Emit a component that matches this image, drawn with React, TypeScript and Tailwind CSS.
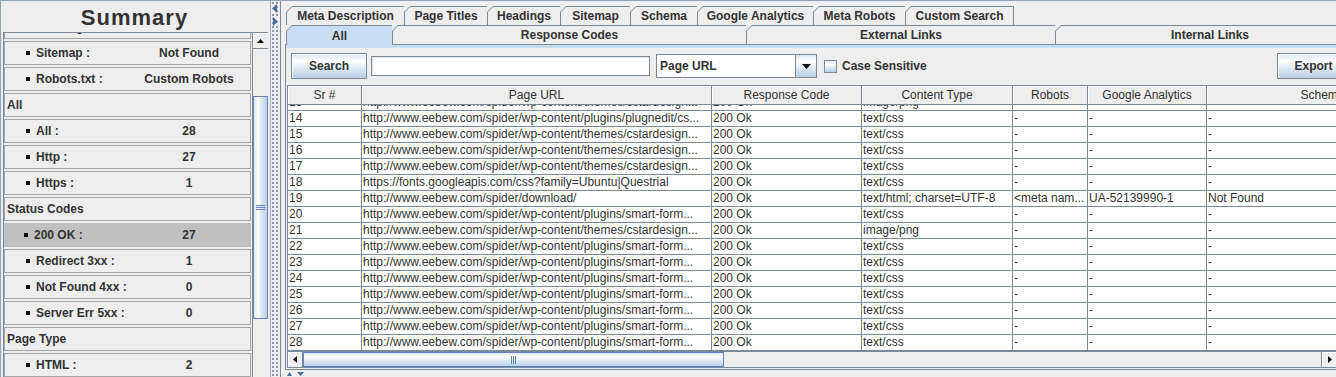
import React from 'react';

// Swing "Metal / Ocean" look: SEO spider results window.
const FONT = "font-['Liberation_Sans',Arial,sans-serif]";
const GRAD_V = 'bg-[linear-gradient(to_bottom,#dde8f3_0%,#ffffff_30%,#dde8f3_60%,#b8cfe5_100%)]';
const GRAD_H = 'bg-[linear-gradient(to_right,#dde8f3_0%,#ffffff_30%,#dde8f3_60%,#b8cfe5_100%)]';

type Item =
    | { kind: 'head'; label: string }
    | { kind: 'row'; label: string; value: string; selected?: boolean; partial?: boolean };

const summary: Item[] = [
    { kind: 'row', label: 'Headings :', value: '', partial: true },
    { kind: 'row', label: 'Sitemap :', value: 'Not Found' },
    { kind: 'row', label: 'Robots.txt :', value: 'Custom Robots' },
    { kind: 'head', label: 'All' },
    { kind: 'row', label: 'All :', value: '28' },
    { kind: 'row', label: 'Http :', value: '27' },
    { kind: 'row', label: 'Https :', value: '1' },
    { kind: 'head', label: 'Status Codes' },
    { kind: 'row', label: '200 OK :', value: '27', selected: true },
    { kind: 'row', label: 'Redirect 3xx :', value: '1' },
    { kind: 'row', label: 'Not Found 4xx :', value: '0' },
    { kind: 'row', label: 'Server Err 5xx :', value: '0' },
    { kind: 'head', label: 'Page Type' },
    { kind: 'row', label: 'HTML :', value: '2' },
];

const tabsTop = [
    { label: 'Meta Description', w: 'w-[118px]' },
    { label: 'Page Titles', w: 'w-[83px]' },
    { label: 'Headings', w: 'w-[73px]' },
    { label: 'Sitemap', w: 'w-[70px]' },
    { label: 'Schema', w: 'w-[67px]' },
    { label: 'Google Analytics', w: 'w-[116px]' },
    { label: 'Meta Robots', w: 'w-[92px]' },
    { label: 'Custom Search', w: 'w-[109px]', last: true },
];

const tabsBottom = [
    { label: 'All', w: 'w-[106px]', selected: true },
    { label: 'Response Codes', w: 'w-[354px]' },
    { label: 'External Links', w: 'w-[309px]' },
    { label: 'Internal Links', w: 'w-[310px]', last: true },
];

const cols = ['w-[74px]', 'w-[350px]', 'w-[150px]', 'w-[151px]', 'w-[75px]', 'w-[119px]', 'w-[232px]'];
const headers = ['Sr #', 'Page URL', 'Response Code', 'Content Type', 'Robots', 'Google Analytics', 'Schema'];

const THEME = 'http://www.eebew.com/spider/wp-content/themes/cstardesign...';
const SMART = 'http://www.eebew.com/spider/wp-content/plugins/smart-form...';

const rows: string[][] = [
    ['13', THEME, '200 Ok', 'image/png', '-', '-', '-'],
    ['14', 'http://www.eebew.com/spider/wp-content/plugins/plugnedit/cs...', '200 Ok', 'text/css', '-', '-', '-'],
    ['15', THEME, '200 Ok', 'text/css', '-', '-', '-'],
    ['16', THEME, '200 Ok', 'text/css', '-', '-', '-'],
    ['17', THEME, '200 Ok', 'text/css', '-', '-', '-'],
    ['18', 'https://fonts.googleapis.com/css?family=Ubuntu|Questrial', '200 Ok', 'text/css', '-', '-', '-'],
    ['19', 'http://www.eebew.com/spider/download/', '200 Ok', 'text/html; charset=UTF-8', '<meta nam...', 'UA-52139990-1', 'Not Found'],
    ['20', SMART, '200 Ok', 'text/css', '-', '-', '-'],
    ['21', THEME, '200 Ok', 'image/png', '-', '-', '-'],
    ['22', SMART, '200 Ok', 'text/css', '-', '-', '-'],
    ['23', SMART, '200 Ok', 'text/css', '-', '-', '-'],
    ['24', SMART, '200 Ok', 'text/css', '-', '-', '-'],
    ['25', SMART, '200 Ok', 'text/css', '-', '-', '-'],
    ['26', SMART, '200 Ok', 'text/css', '-', '-', '-'],
    ['27', SMART, '200 Ok', 'text/css', '-', '-', '-'],
    ['28', SMART, '200 Ok', 'text/css', '-', '-', '-'],
];

function Tri({ dir, color = '#111', w = 7, h = 4 }: { dir: 'up' | 'down' | 'left' | 'right'; color?: string; w?: number; h?: number }) {
    const pts =
        dir === 'up'
            ? `0,${h} ${w},${h} ${w / 2},0`
            : dir === 'down'
              ? `0,0 ${w},0 ${w / 2},${h}`
              : dir === 'left'
                ? `${w},0 ${w},${h} 0,${h / 2}`
                : `0,0 0,${h} ${w},${h / 2}`;
    return (
        <svg width={w} height={h} viewBox={`0 0 ${w} ${h}`} className="block">
            <polygon points={pts} fill={color} />
        </svg>
    );
}

function Tab({ label, w, selected, last }: { label: string; w: string; selected?: boolean; last?: boolean }) {
    return (
        <div
            className={`${w} h-full shrink-0 bg-[#7a8a99] pl-[1px] pt-[1px] ${last ? 'pr-[1px]' : ''} [clip-path:polygon(0_6px,6px_0,100%_0,100%_100%,0_100%)]`}
        >
            <div
                className={`flex h-full items-center justify-center text-[12px] font-bold ${
                    selected ? 'bg-[#c8ddf2]' : 'bg-[#eeeeee]'
                } [clip-path:polygon(0_5px,5px_0,100%_0,100%_100%,0_100%)]`}
            >
                {label}
            </div>
        </div>
    );
}

function MetalButton({ label, className = '' }: { label: string; className?: string }) {
    return (
        <div
            className={`flex h-[26px] shrink-0 items-center justify-center border border-[#7a8a99] ${GRAD_V} text-[12px] font-bold shadow-[inset_1px_1px_0_#ffffff] ${className}`}
        >
            {label}
        </div>
    );
}

function SummaryPanel() {
    return (
        <div className="flex h-full w-[268px] shrink-0 flex-col border-l border-[#8fa3b8]">
            <div className="flex h-[31px] items-center justify-center pt-[3px] text-[22px] font-bold leading-none tracking-[1px]">
                Summary
            </div>
            <div className="ml-[2px] flex min-h-0 flex-1 border-l border-t border-[#7a8a99]">
                <div className="flex w-[248px] flex-col gap-[2px] overflow-hidden text-[12px] font-bold">
                    {summary.map((it, i) =>
                        it.kind === 'head' ? (
                            <div
                                key={i}
                                className="mr-[1px] flex h-[24px] shrink-0 items-center border border-[#a5a5a5] pl-[2px]"
                            >
                                {it.label}
                            </div>
                        ) : (
                            <div
                                key={i}
                                className={`mr-[1px] flex h-[24px] shrink-0 items-center border ${
                                    it.selected ? 'border-[#c0c0c0] bg-[#c0c0c0]' : 'border-[#a5a5a5]'
                                } ${it.partial ? '-mt-[18px]' : ''}`}
                            >
                                <div className={`flex w-[124px] items-center ${it.selected ? 'pl-[19px]' : 'pl-[21px]'}`}>
                                    <span className="h-[4px] w-[4px] shrink-0 bg-[#111]" />
                                    <span className="ml-[6px] whitespace-nowrap">{it.label}</span>
                                </div>
                                <div className="w-[120px] text-center">{it.value}</div>
                            </div>
                        ),
                    )}
                </div>
                {/* vertical scrollbar */}
                <div className="flex w-[16px] flex-col border-l border-[#7a8a99] bg-[#eeeeee]">
                    <div className="flex h-[16px] items-center justify-center border-b border-[#7a8a99] shadow-[inset_1px_1px_0_#ffffff]">
                        <Tri dir="up" />
                    </div>
                    <div
                        className={`mt-[47px] flex h-[223px] items-center justify-center border border-[#6382bf] ${GRAD_H}`}
                    >
                        <div className="flex flex-col gap-[1px]">
                            <span className="h-[1px] w-[9px] bg-[#6382bf]" />
                            <span className="h-[1px] w-[9px] bg-[#6382bf]" />
                            <span className="h-[1px] w-[9px] bg-[#6382bf]" />
                        </div>
                    </div>
                </div>
            </div>
        </div>
    );
}

function Divider() {
    return (
        <div className="flex h-full w-[12px] shrink-0">
            <div className="w-[2px]" />
            <div className="w-[1px] bg-[#a3adb8]" />
            <div className="relative w-[9px] [background-image:radial-gradient(circle,#8a9aab_0.8px,transparent_1px)] [background-size:4px_4px]">
                <div className="absolute left-[1px] top-[3px] bg-[#eeeeee]">
                    <Tri dir="left" color="#4a6b9a" w={5} h={9} />
                </div>
                <div className="absolute left-[2px] top-[16px] bg-[#eeeeee]">
                    <Tri dir="right" color="#4a6b9a" w={5} h={9} />
                </div>
            </div>
        </div>
    );
}

function ResultsTable() {
    return (
        <div className="ml-[1px] w-[1200px] border-b border-l border-t border-[#7a8a99]">
            <div className="flex h-[19px] border-b border-[#7a8a99] bg-[#eeeeee] text-[12px]">
                {headers.map((h, i) => (
                    <div
                        key={h}
                        className={`${cols[i]} flex shrink-0 items-center justify-center overflow-hidden whitespace-nowrap border-r border-[#7a8a99] shadow-[inset_1px_1px_0_#ffffff]`}
                    >
                        {h}
                    </div>
                ))}
            </div>
            <div className="h-[246px] overflow-hidden bg-white">
                <div className="-mt-[10px]">
                    {rows.map((r) => (
                        <div key={r[0]} className="flex h-[16px] border-b border-[#7a8a99] text-[12px] leading-[15px]">
                            {r.map((c, i) => (
                                <div
                                    key={i}
                                    className={`${cols[i]} shrink-0 overflow-hidden whitespace-nowrap border-r border-[#7a8a99] pl-[1px]`}
                                >
                                    {c}
                                </div>
                            ))}
                        </div>
                    ))}
                </div>
            </div>
            {/* horizontal scrollbar */}
            <div className="flex h-[16px] w-[1049px] border-t border-[#7a8a99] bg-[#eeeeee]">
                <div className="flex w-[15px] items-center justify-center border-r border-[#7a8a99] shadow-[inset_1px_1px_0_#ffffff]">
                    <Tri dir="left" w={4} h={7} />
                </div>
                <div className={`flex w-[421px] items-center justify-center border border-[#6382bf] ${GRAD_V}`}>
                    <div className="flex gap-[1px]">
                        <span className="h-[8px] w-[1px] bg-[#6382bf]" />
                        <span className="h-[8px] w-[1px] bg-[#6382bf]" />
                        <span className="h-[8px] w-[1px] bg-[#6382bf]" />
                    </div>
                </div>
                <div className="flex-1" />
                <div className="flex w-[16px] items-center justify-center border-l border-[#7a8a99] shadow-[inset_1px_1px_0_#ffffff]">
                    <Tri dir="right" w={4} h={7} />
                </div>
            </div>
        </div>
    );
}

function ResultsPanel() {
    return (
        <div className="flex h-full w-[1200px] shrink-0 flex-col border-l border-[#7a8a99] pt-[5px]">
            <div className="pl-[5px]">
                <div className="flex h-[19px]">
                    {tabsTop.map((t) => (
                        <Tab key={t.label} {...t} />
                    ))}
                </div>
                <div className="flex h-[19px] items-start">
                    {tabsBottom.map((t) => (
                        <div key={t.label} className={t.selected ? 'relative z-10 -mb-[1px] h-[20px]' : 'h-[19px]'}>
                            <Tab {...t} />
                        </div>
                    ))}
                </div>
            </div>

            <div className="ml-[4px] flex flex-col border-b border-l border-[#7a8a99] pb-[1px]">
                <div className="h-[4px] border-t border-[#7a8a99] bg-[#c8ddf2]" />
                <div className="pt-[5px]">
                    <div className="flex h-[26px] w-[1064px] items-center pl-[5px] text-[12px]">
                        <MetalButton label="Search" className="w-[76px]" />
                        <div className="ml-[4px] h-[20px] w-[279px] border border-[#7a8a99] bg-white shadow-[inset_1px_1px_0_#e4e4e4]" />
                        <div className="ml-[6px] flex h-[24px] w-[161px] border border-[#7a8a99] bg-white">
                            <div className="flex flex-1 items-center pl-[3px] font-bold">Page URL</div>
                            <div className={`flex w-[21px] items-center justify-center border-l border-[#7a8a99] ${GRAD_V}`}>
                                <Tri dir="down" w={9} h={5} />
                            </div>
                        </div>
                        <div className={`ml-[7px] h-[13px] w-[13px] border border-[#7a8a99] ${GRAD_V}`} />
                        <span className="ml-[5px] font-bold">Case Sensitive</span>
                        <MetalButton label="Export" className="ml-auto w-[73px]" />
                    </div>
                    <div className="mt-[6px]">
                        <ResultsTable />
                    </div>
                </div>
            </div>

            <div className="flex flex-1 items-start gap-[5px] pl-[6px] pt-[2px]">
                <Tri dir="up" color="#4a6b9a" w={5} h={4} />
                <Tri dir="down" color="#4a6b9a" w={7} h={4} />
            </div>
        </div>
    );
}

export default function App() {
    return (
        <div className={`flex h-[377px] w-[1336px] overflow-hidden border-t border-[#8fa3b8] bg-[#eeeeee] text-[#333333] ${FONT}`}>
            <SummaryPanel />
            <Divider />
            <ResultsPanel />
        </div>
    );
}
